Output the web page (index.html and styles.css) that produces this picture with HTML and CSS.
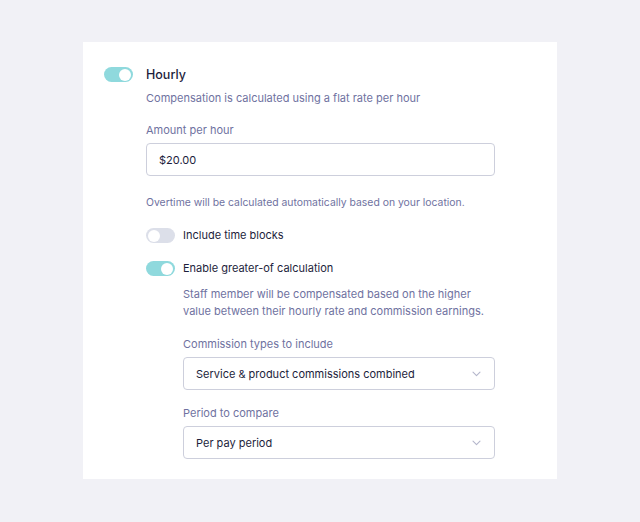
FILE: index.html
```html
<!DOCTYPE html>
<html>
<head>
<meta charset="utf-8">
<link rel="stylesheet" href="styles.css">
</head>
<body>
<div class="page">
  <div class="card">
    <div class="row head">
      <span class="toggle on big"><span class="thumb"></span></span>
      <span class="title">Hourly</span>
    </div>
    <div class="body">
      <p class="desc first">Compensation is calculated using a flat rate per hour</p>
      <label class="label">Amount per hour</label>
      <div class="input">$20.00</div>
      <p class="desc overtime">Overtime will be calculated automatically based on your location.</p>

      <div class="row opt">
        <span class="toggle off"><span class="thumb"></span></span>
        <span class="opt-text">Include time blocks</span>
      </div>
      <div class="row opt opt2">
        <span class="toggle on"><span class="thumb"></span></span>
        <span class="opt-text">Enable greater-of calculation</span>
      </div>
      <div class="sub">
        <p class="desc two">Staff member will be compensated based on the higher value between their hourly rate and commission earnings.</p>
        <label class="label l2">Commission types to include</label>
        <div class="input select">
          <span>Service &amp; product commissions combined</span>
          <svg class="chev" width="9" height="6" viewBox="0 0 9 6"><path d="M1 1.2l3.5 3.5 3.5-3.5" fill="none" stroke="#b4b6cb" stroke-width="1.1" stroke-linecap="round" stroke-linejoin="round"/></svg>
        </div>
        <label class="label l3">Period to compare</label>
        <div class="input select">
          <span>Per pay period</span>
          <svg class="chev" width="9" height="6" viewBox="0 0 9 6"><path d="M1 1.2l3.5 3.5 3.5-3.5" fill="none" stroke="#b4b6cb" stroke-width="1.1" stroke-linecap="round" stroke-linejoin="round"/></svg>
        </div>
      </div>
    </div>
  </div>
</div>
</body>
</html>
```
FILE: styles.css
```css
* { box-sizing: border-box; }
html, body { margin: 0; padding: 0; }
body {
  background: #f1f1f6;
  font-family: Inter, "Noto Sans", sans-serif;
  color: #1d1e3c;
  width: 640px;
  height: 522px;
}
.page { padding-top: 42px; padding-left: 83px; }
.card {
  width: 474px;
  height: 437px;
  background: #ffffff;
  padding: 24px 62px 0 21px;
}
.row { display: flex; align-items: center; }
.toggle {
  width: 29px;
  height: 15px;
  border-radius: 8px;
  display: flex;
  align-items: center;
  padding: 0 2px;
  flex: none;
}
.toggle .thumb {
  width: 12px; height: 12px; border-radius: 50%; background: #fff;
}
.toggle.on { background: #8fd9dd; justify-content: flex-end; }
.toggle.off { background: #dcdfe9; justify-content: flex-start; }
.head { height: 17px; }
.head .toggle { margin-right: 13px; }
.title { font-size: 12.5px; font-weight: 500; color: #1d1e3c; line-height: 17px; }
.body { padding-left: 42px; }
.desc {
  margin: 0;
  font-size: 11px;
  color: #6f729f;
  line-height: 17px;
}
.desc.first { margin-top: 7px; }
.label {
  display: block;
  font-size: 11px;
  color: #6f729f;
  line-height: 17px;
  margin-top: 15px;
}
.input {
  margin-top: 4px;
  height: 33px;
  border: 1px solid #cdcfdc;
  border-radius: 4px;
  padding: 0 12px;
  display: flex;
  align-items: center;
  font-size: 11px;
  color: #1d1e3c;
}
.desc.overtime { margin-top: 18px; font-size: 10.4px; }
.opt { margin-top: 16px; height: 17px; }
.opt2 { margin-top: 16px; }
.opt .toggle { margin-right: 8px; }
.opt-text { font-size: 11px; color: #1d1e3c; line-height: 17px; }
.sub { padding-left: 37px; }
.desc.two { margin-top: 9px; }
.l2 { margin-top: 16px; }
.l3 { margin-top: 15px; }
.select { justify-content: space-between; padding-right: 13px; }
.chev { flex: none; }
```
